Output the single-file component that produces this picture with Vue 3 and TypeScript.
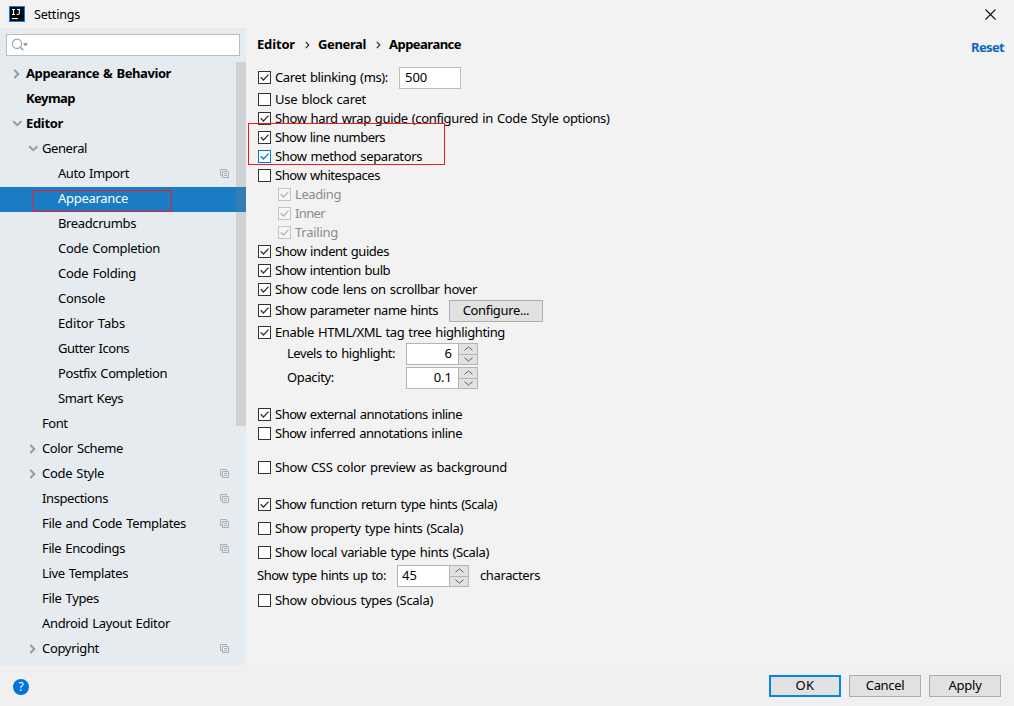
<script setup lang="ts">
import { ref } from 'vue'

interface TreeItem {
  label: string
  width: number
  level: number
  arrow?: 'open' | 'closed'
  bold?: boolean
  project?: boolean
}

interface Option {
  label: string
  width: number
  kind?: 'check' | 'spinner' | 'inline'
  on?: boolean
  gap?: number
  disabled?: boolean
  focused?: boolean
  value?: string
  button?: string
  suffix?: string
}

const selected = ref('Appearance')

const tree: TreeItem[] = [
  { label: 'Appearance & Behavior', width: 145, level: 0, arrow: 'closed', bold: true },
  { label: 'Keymap', width: 49, level: 0, bold: true },
  { label: 'Editor', width: 37, level: 0, arrow: 'open', bold: true },
  { label: 'General', width: 45, level: 1, arrow: 'open' },
  { label: 'Auto Import', width: 71, level: 2, project: true },
  { label: 'Appearance', width: 70, level: 2 },
  { label: 'Breadcrumbs', width: 78, level: 2 },
  { label: 'Code Completion', width: 102, level: 2 },
  { label: 'Code Folding', width: 78, level: 2 },
  { label: 'Console', width: 47, level: 2 },
  { label: 'Editor Tabs', width: 67, level: 2 },
  { label: 'Gutter Icons', width: 71, level: 2 },
  { label: 'Postfix Completion', width: 109, level: 2 },
  { label: 'Smart Keys', width: 65, level: 2 },
  { label: 'Font', width: 25.5, level: 1 },
  { label: 'Color Scheme', width: 81, level: 1, arrow: 'closed' },
  { label: 'Code Style', width: 62, level: 1, arrow: 'closed', project: true },
  { label: 'Inspections', width: 66, level: 1, project: true },
  { label: 'File and Code Templates', width: 144, level: 1, project: true },
  { label: 'File Encodings', width: 83, level: 1, project: true },
  { label: 'Live Templates', width: 86, level: 1 },
  { label: 'File Types', width: 57, level: 1 },
  { label: 'Android Layout Editor', width: 128, level: 1 },
  { label: 'Copyright', width: 57, level: 1, arrow: 'closed', project: true },
]

const options = ref<Option[]>([
  { label: 'Caret blinking (ms):', width: 113, on: true, value: '500' },
  { label: 'Use block caret', width: 91, gap: 1 },
  { label: 'Show hard wrap guide (configured in Code Style options)', width: 334.5, on: true },
  { label: 'Show line numbers', width: 110, on: true },
  { label: 'Show method separators', width: 147, on: true, focused: true },
  { label: 'Show whitespaces', width: 105 },
  { label: 'Leading', width: 46, on: true, disabled: true },
  { label: 'Inner', width: 30, on: true, disabled: true },
  { label: 'Trailing', width: 43, on: true, disabled: true },
  { label: 'Show indent guides', width: 114, on: true },
  { label: 'Show intention bulb', width: 115, on: true },
  { label: 'Show code lens on scrollbar hover', width: 202, on: true },
  { label: 'Show parameter name hints', width: 163, on: true, gap: 1, button: 'Configure...' },
  { label: 'Enable HTML/XML tag tree highlighting', width: 230, on: true, gap: 1 },
  { label: 'Levels to highlight:', width: 108, kind: 'spinner', value: '6', gap: 1 },
  { label: 'Opacity:', width: 47, kind: 'spinner', value: '0.1', gap: 2 },
  { label: 'Show external annotations inline', width: 187, on: true, gap: 16 },
  { label: 'Show inferred annotations inline', width: 187 },
  { label: 'Show CSS color preview as background', width: 232, gap: 15 },
  { label: 'Show function return type hints (Scala)', width: 222, on: true, gap: 18 },
  { label: 'Show property type hints (Scala)', width: 188, gap: 5 },
  { label: 'Show local variable type hints (Scala)', width: 214, gap: 5 },
  { label: 'Show type hints up to:', width: 129, kind: 'inline', value: '45', suffix: 'characters', gap: 3 },
  { label: 'Show obvious types (Scala)', width: 158, gap: 4 },
])

function isCheck(o: Option): boolean {
  return !o.kind
}
function toggle(o: Option): void {
  if (!o.disabled) o.on = !o.on
}

// Tightens or loosens the tracking so a label takes exactly the given width.
const vFit = {
  mounted(el: HTMLElement, binding: { value: number }) {
    const natural = el.getBoundingClientRect().width
    const count = (el.textContent || '').length
    if (count) el.style.letterSpacing = (binding.value - natural) / count + 'px'
  },
}
</script>

<template>
  <div class="window">
    <header class="titlebar">
      <svg class="logo" width="16" height="16" viewBox="0 0 16 16">
        <rect width="16" height="16" fill="#087cfa" />
        <rect x="1" y="1" width="14" height="14" fill="#0a0a0a" />
        <path d="M3 3.5h3M4.5 3.5v5M3 8.5h3M8 3.5h3M10.3 3.5v3.6q0 1.4-1.3 1.4h-1.4" fill="none" stroke="#fff" stroke-width="1.1" />
        <rect x="3" y="12" width="6" height="1.1" fill="#fff" />
      </svg>
      <span class="title"><span v-fit="46">Settings</span></span>
      <svg class="close" width="11" height="11" viewBox="0 0 11 11">
        <path d="M.5 .5l10 10M10.5 .5l-10 10" stroke="#111" stroke-width="1.1" />
      </svg>
    </header>

    <div class="body">
      <aside class="sidebar">
        <div class="search">
          <svg width="18" height="14" viewBox="0 0 18 14">
            <circle cx="6" cy="5.8" r="4.6" fill="none" stroke="#9aa7b0" stroke-width="1.2" />
            <path d="M9.2 9l3 3.2" stroke="#9aa7b0" stroke-width="1.7" />
            <path d="M12 5.2h5l-2.5 3z" fill="#7f8b91" />
          </svg>
        </div>
        <nav class="tree">
          <div
            v-for="item in tree"
            :key="item.label"
            class="node"
            :class="['level-' + item.level, { bold: item.bold, selected: item.label === selected }]"
            @click="selected = item.label"
          >
            <span class="arrow">
              <svg v-if="item.arrow === 'closed'" width="10" height="10" viewBox="0 0 10 10">
                <path d="M3.4 1l3.9 4-3.9 4" fill="none" stroke="#999b9e" stroke-width="2" />
              </svg>
              <svg v-if="item.arrow === 'open'" width="11" height="10" viewBox="0 0 11 10">
                <path d="M2.2 2.3l4.1 3.9 4.1-3.9" fill="none" stroke="#999b9e" stroke-width="2" />
              </svg>
            </span>
            <span v-fit="item.width" class="node-label">{{ item.label }}</span>
            <svg v-if="item.project" class="project" width="9" height="9" viewBox="0 0 9 9">
              <path d="M1.8 6.5H.5V.5h6v1.3M2.5 2.5h6v6h-6zM4 4.5h3M4 6.5h3" fill="none" stroke="#a3b0b9" />
            </svg>
          </div>
        </nav>
        <div class="thumb"></div>
        <div class="mark mark-tree"></div>
      </aside>

      <main class="content">
        <div class="crumbs">
          <span v-fit="38">Editor</span>
          <svg width="5" height="8" viewBox="0 0 5 8"><path d="M.8 .8L3.8 4 .8 7.2" fill="none" stroke="#222" stroke-width="1.1" /></svg>
          <span v-fit="48">General</span>
          <svg width="5" height="8" viewBox="0 0 5 8"><path d="M.8 .8L3.8 4 .8 7.2" fill="none" stroke="#222" stroke-width="1.1" /></svg>
          <span v-fit="72">Appearance</span>
          <a v-fit="33" class="reset">Reset</a>
        </div>

        <div
          v-for="o in options"
          :key="o.label"
          class="row"
          :class="{
            tall: o.value || o.button,
            nested: o.disabled,
            spin: o.kind === 'spinner',
            inline: o.kind === 'inline',
            focused: o.focused,
          }"
          :style="{ marginTop: (o.gap || 0) + 'px' }"
          @click="toggle(o)"
        >
          <span v-if="isCheck(o)" class="box">
            <svg v-if="o.on" width="11" height="11" viewBox="0 0 11 11">
              <path d="M1.7 5.2l2.8 2.8 5-5.4" fill="none" stroke="currentColor" stroke-width="1.3" />
            </svg>
          </span>
          <span class="text"><span v-fit="o.width">{{ o.label }}</span></span>
          <span v-if="o.value && isCheck(o)" class="field">{{ o.value }}</span>
          <button v-if="o.button" class="btn configure"><span v-fit="66.5">{{ o.button }}</span></button>
          <span v-if="o.kind" class="spinner">
            <span class="spin-value">{{ o.value }}</span>
            <span class="spin-buttons">
              <span><svg width="9" height="5" viewBox="0 0 9 5"><path d="M.5 4.3l4-3.4 4 3.4" fill="none" stroke="#606060" /></svg></span>
              <span><svg width="9" height="5" viewBox="0 0 9 5"><path d="M.5 .7l4 3.4 4-3.4" fill="none" stroke="#606060" /></svg></span>
            </span>
          </span>
          <span v-if="o.suffix" class="text suffix"><span v-fit="60">{{ o.suffix }}</span></span>
        </div>
        <div class="mark mark-options"></div>
      </main>
    </div>

    <footer class="footer">
      <span class="help">?</span>
      <button class="btn primary"><span v-fit="19">OK</span></button>
      <button class="btn"><span v-fit="38.5">Cancel</span></button>
      <button class="btn"><span v-fit="33">Apply</span></button>
    </footer>
  </div>
</template>

<style>
body {
  margin: 0;
  overflow: hidden;
}
</style>

<style scoped>
.window {
  width: 1014px;
  height: 706px;
  display: flex;
  flex-direction: column;
  background: #f2f2f2;
  color: #000;
  font: 13px/19px "Noto Sans", "Open Sans", sans-serif;
  word-spacing: 1px;
  white-space: nowrap;
  overflow: hidden;
}
.titlebar {
  height: 28px;
  display: flex;
  align-items: center;
  box-sizing: border-box;
  padding: 0 18px 0 9px;
}
.title {
  margin-left: 9px;
  font-size: 12.6px;
}
.close {
  margin-left: auto;
}
.body {
  height: 637px;
  display: flex;
}
.sidebar {
  position: relative;
  width: 246px;
  flex: none;
  background: #e6ebef;
}
.search {
  box-sizing: border-box;
  width: 234px;
  height: 22px;
  margin: 6px 6px 0;
  padding: 3px 4px;
  border: 1px solid #bdbdbd;
  background: #fff;
  display: flex;
}
.tree {
  margin-top: 6px;
}
.node {
  height: 25px;
  display: flex;
  align-items: center;
  box-sizing: border-box;
  padding-right: 17px;
}
.level-0 { padding-left: 11px; }
.level-1 { padding-left: 27px; }
.level-2 { padding-left: 43px; }
.arrow {
  width: 15px;
  height: 10px;
  display: flex;
  position: relative;
  top: -1px;
}
.node-label {
  line-height: 25px;
  height: 27px;
}
.bold {
  font-weight: 700;
}
.selected {
  background: #1a7dc4;
  color: #fff;
}
.project {
  margin: 0 0 2px auto;
}
.thumb {
  position: absolute;
  right: 0;
  top: 34px;
  width: 10px;
  height: 364px;
  background: rgba(128, 128, 128, 0.24);
}
.mark {
  position: absolute;
  box-sizing: border-box;
  border: 1px solid #ed1c24;
  pointer-events: none;
}
.mark-tree {
  left: 33px;
  top: 162px;
  width: 139px;
  height: 22px;
}
.mark-options {
  left: 2px;
  top: 95px;
  width: 197px;
  height: 42px;
}
.content {
  position: relative;
  flex: 1;
  padding: 6px 10px 0 12px;
}
.crumbs {
  height: 20px;
  line-height: 19px;
  margin-bottom: 13px;
  display: flex;
  align-items: center;
  font-weight: 700;
  margin-left: -1px;
}
.crumbs svg {
  margin: 1px 8px 0 10px;
}
.reset {
  margin-left: auto;
  position: relative;
  top: 3px;
  color: #0a66c2;
}
.row {
  height: 19px;
  display: flex;
  align-items: flex-start;
}
.row.tall {
  height: 22px;
}
.box {
  box-sizing: border-box;
  width: 13px;
  height: 13px;
  margin-top: 3px;
  border: 1px solid #333;
  background: #fff;
  color: #333;
  display: flex;
}
.tall .box {
  margin-top: 4px;
}
.text {
  margin-left: 4px;
}
.tall .text {
  line-height: 21px;
}
.nested {
  padding-left: 20px;
  color: #8c8c8c;
}
.nested .box {
  border-color: #c4c4c4;
  background: #f6f6f6;
  color: #b4b4b4;
}
.focused .box {
  border-color: #0078d7;
  color: #0078d7;
}
.field {
  box-sizing: border-box;
  width: 62px;
  height: 22px;
  margin-left: 11px;
  padding-left: 5px;
  border: 1px solid #bdbdbd;
  background: #fff;
}
.btn {
  box-sizing: border-box;
  width: 72px;
  height: 22px;
  padding: 0 0 2px;
  border: 1px solid #adadad;
  background: #e1e1e1;
  color: #000;
  font: inherit;
  line-height: 18px;
}
.configure {
  width: 94px;
  margin-left: 11px;
}
.spin .text {
  width: 119px;
  margin-left: 29px;
}
.inline .text {
  width: 140px;
  margin-left: -1px;
}
.inline .suffix {
  margin-left: 11px;
}
.spinner {
  box-sizing: border-box;
  width: 72px;
  height: 22px;
  display: flex;
  border: 1px solid #b4b4b4;
  background: #fff;
}
.spin-value {
  flex: 1;
  padding: 0 6px 0 4px;
}
.spin .spin-value {
  text-align: right;
}
.spin-buttons {
  width: 18px;
  display: flex;
  flex-direction: column;
  border-left: 1px solid #b4b4b4;
  background: #e1e1e1;
}
.spin-buttons span {
  flex: 1;
  display: flex;
  align-items: center;
  justify-content: center;
}
.spin-buttons span + span {
  border-top: 1px solid #b4b4b4;
}
.footer {
  height: 41px;
  box-sizing: border-box;
  background: #f0f0f0;
  display: flex;
  align-items: flex-start;
  gap: 8px;
  padding: 10px 13px 0;
}
.help {
  width: 16px;
  height: 16px;
  margin: 4px auto 0 0;
  border-radius: 50%;
  background: #0074d9;
  color: #fff;
  font-size: 12px;
  line-height: 16px;
  text-align: center;
}
.primary {
  padding-bottom: 1px;
  border: 2px solid #0a84dc;
  line-height: 17px;
}
</style>
